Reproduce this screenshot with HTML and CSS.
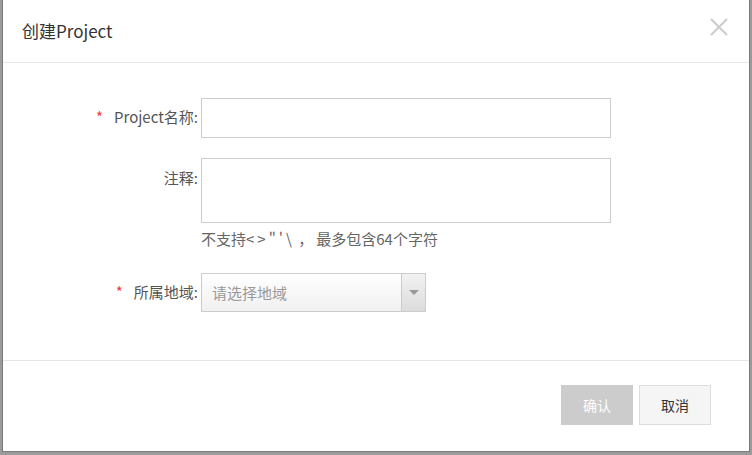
FILE: index.html
```html
<!DOCTYPE html>
<html lang="zh-CN">
<head>
<meta charset="utf-8">
<title>创建Project</title>
<link rel="stylesheet" href="styles.css">
</head>
<body>
<div class="dialog">
  <div class="header">
    <span class="title">创建Project</span>
    <span class="close" aria-label="关闭">
      <svg width="18" height="18" viewBox="0 0 18 18"><path d="M1 1L17 17M17 1L1 17" stroke="#cccccc" stroke-width="2" fill="none"/></svg>
    </span>
  </div>
  <div class="body">
    <div class="row row-name">
      <label class="label"><span class="req">*</span>Project名称:</label>
      <div class="field"><input class="input" type="text"></div>
    </div>
    <div class="row row-note">
      <label class="label label-top">注释:</label>
      <div class="field">
        <textarea class="textarea"></textarea>
        <div class="hint">不支持<span class="ascii">&lt;&gt;"'\</span> <span class="comma">，</span>最多包含64个字符</div>
      </div>
    </div>
    <div class="row row-region">
      <label class="label"><span class="req">*</span>所属地域:</label>
      <div class="field">
        <div class="select">
          <span class="placeholder">请选择地域</span>
          <span class="arrow"><span class="tri"></span></span>
        </div>
      </div>
    </div>
  </div>
  <div class="footer">
    <button class="btn btn-ok" type="button">确认</button>
    <button class="btn btn-cancel" type="button">取消</button>
  </div>
</div>
</body>
</html>
```
FILE: styles.css
```css
html, body {
  margin: 0;
  padding: 0;
}
body {
  background: #9b9b9b;
  padding-left: 2px;
  height: 455px;
  overflow: hidden;
  font-family: "Noto Sans CJK SC", "Noto Sans", sans-serif;
  color: #333;
}
.dialog {
  width: 748px;
  height: 452px;
  box-sizing: border-box;
  background: #fff;
  border: 1px solid #7a7a7a;
  border-top: 0;
  display: flex;
  flex-direction: column;
}
.header {
  height: 62px;
  flex: none;
  border-bottom: 1px solid #e6e6e6;
  display: flex;
  align-items: center;
  justify-content: space-between;
  padding: 0 21px 0 19px;
}
.title {
  font-size: 17px;
  color: #333;
  margin-top: -1px;
}
.close {
  width: 18px;
  height: 18px;
  display: block;
  margin-top: -8px;
}
.close svg { display: block; }
.body {
  height: 298px;
  flex: none;
  box-sizing: border-box;
  border-bottom: 1px solid #e6e6e6;
  padding-top: 35px;
}
.row {
  display: grid;
  grid-template-columns: 195px 410px;
  column-gap: 3px;
  align-items: center;
}
.row-name { margin-bottom: 20px; }
.row-note { align-items: start; margin-bottom: 24px; }
.label {
  text-align: right;
  font-size: 15px;
  color: #555;
  white-space: nowrap;
  margin-top: -3px;
}
.label-top { padding-top: 9px; margin-top: 0; }
.req {
  color: #f03c3c;
  margin-right: 11px;
}
.input {
  display: block;
  width: 410px;
  height: 40px;
  box-sizing: border-box;
  border: 1px solid #cccccc;
  margin: 0;
  padding: 0 10px;
  outline: none;
}
.textarea {
  display: block;
  width: 410px;
  height: 65px;
  box-sizing: border-box;
  border: 1px solid #cccccc;
  margin: 0;
  padding: 6px 10px;
  resize: none;
  outline: none;
  font-family: inherit;
}
.hint {
  font-size: 15px;
  color: #666;
  margin-top: 6px;
  line-height: 20px;
  white-space: nowrap;
}
.ascii { letter-spacing: 3px; }
.comma { letter-spacing: 3px; }
.select {
  width: 225px;
  height: 39px;
  box-sizing: border-box;
  border: 1px solid #cccccc;
  display: flex;
  align-items: center;
  background: linear-gradient(#ffffff, #f0f0f0);
}
.placeholder {
  flex: 1;
  padding-left: 10px;
  font-size: 15px;
  color: #999;
}
.arrow {
  width: 23px;
  height: 100%;
  border-left: 1px solid #cccccc;
  background: linear-gradient(#f2f2f2, #dcdcdc);
  display: flex;
  align-items: center;
  justify-content: center;
}
.tri {
  width: 0;
  height: 0;
  border-left: 5px solid transparent;
  border-right: 5px solid transparent;
  border-top: 5px solid #999;
}
.footer {
  flex: 1;
  display: flex;
  justify-content: flex-end;
  align-items: flex-start;
  gap: 6px;
  padding: 24px 38px 0 0;
}
.btn {
  width: 72px;
  height: 40px;
  box-sizing: border-box;
  font-family: inherit;
  font-size: 14px;
  margin: 0;
  padding: 0;
  cursor: pointer;
}
.btn-ok {
  background: #cccccc;
  border: 1px solid #cccccc;
  color: #fff;
}
.btn-cancel {
  background: #f5f5f5;
  border: 1px solid #dddddd;
  color: #333;
}
```
